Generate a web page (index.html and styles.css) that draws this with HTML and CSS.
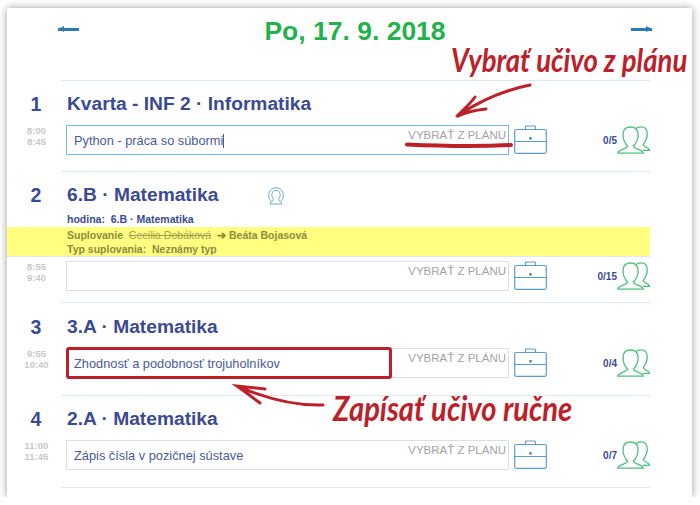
FILE: index.html
```html
<!DOCTYPE html>
<html lang="sk">
<head>
  <meta charset="UTF-8" />
  <title>Triedna kniha</title>
  <link rel="stylesheet" href="styles.css">
</head>
<body>
  <svg width="0" height="0" class="defs">
    <symbol id="case" viewBox="0 0 33 29">
      <path d="M11.5 4.5V2a1 1 0 0 1 1-1h8a1 1 0 0 1 1 1v2.5" fill="none"/>
      <rect x="0.7" y="4.5" width="31.6" height="23.8" rx="1.5" fill="none"/>
      <path d="M0.7 16.5H32.3" fill="none"/>
      <circle cx="16.5" cy="13.2" r="0.9" class="dot"/>
    </symbol>
    <symbol id="people" viewBox="0 0 33 28">
      <path d="M0.8 27.2C1 23.5 9 23.6 10.8 20.3C8 17.5 5.6 12.5 6.1 7.4C6.5 2.8 10 1 13.5 1C17 1 20.6 2.8 21 7.4C21.5 12.5 19 17.5 16.3 20.3C18 23.6 26 23.5 26.2 27.2Z" fill="none"/>
      <path d="M19.3 2.2C20.8 1.2 22.6 0.9 24 0.9C27.5 0.9 30 3 30.2 7.2C30.5 12 28.4 15.6 26.2 18.6C27.2 21.4 32 21.2 32.6 24.3H26" fill="none"/>
    </symbol>
  </svg>

  <div class="card">
    <header class="day-head">
      <span class="nav-arrow left"></span>
      <h1 class="day-title">Po, 17. 9. 2018</h1>
      <span class="nav-arrow right"></span>
    </header>
    <div class="sep"></div>

    <section class="lesson">
      <div class="lesson-head"><span class="num">1</span><h2 class="subject">Kvarta - INF 2 · Informatika</h2></div>
      <div class="lesson-row">
        <div class="times">8:00<br>8:45</div>
        <div class="topic active"><span class="topic-text">Python - práca so súbormi<i class="caret"></i></span><span class="pick">VYBRAŤ Z PLÁNU</span></div>
        <svg class="icon-case"><use href="#case"/></svg>
        <span class="count">0/5</span>
        <svg class="icon-people"><use href="#people"/></svg>
      </div>
    </section>
    <div class="sep"></div>

    <section class="lesson sub">
      <div class="lesson-head">
        <span class="num">2</span><h2 class="subject">6.B · Matematika</h2>
        <svg class="icon-teacher" viewBox="0 0 16 18"><path d="M3.5 14.5C1 12.5 0.6 10 0.7 8C1 3.5 4 0.8 8 0.8S15 3.5 15.3 8C15.4 10 15 12.5 12.5 14.5M5.5 12.5C4 10 3.5 8.5 4 6.5C4.5 4.5 6 3.5 8 3.5S11.5 4.5 12 6.5C12.5 8.5 12 10 10.5 12.5C10.5 14 13.5 14.5 14 17H2C2.5 14.5 5.5 14 5.5 12.5Z" fill="none"/></svg>
      </div>
      <div class="sub-class">hodina:&nbsp; 6.B · Matematika</div>
      <div class="sub-note">
        <div>Suplovanie&nbsp; <s>Cecília Dobáková</s> ➔ Beáta Bojasová</div>
        <div>Typ suplovania:&nbsp; Neznámy typ</div>
      </div>
      <div class="lesson-row">
        <div class="times">8:55<br>9:40</div>
        <div class="topic"><span class="topic-text"></span><span class="pick">VYBRAŤ Z PLÁNU</span></div>
        <svg class="icon-case"><use href="#case"/></svg>
        <span class="count">0/15</span>
        <svg class="icon-people"><use href="#people"/></svg>
      </div>
    </section>
    <div class="sep"></div>

    <section class="lesson third">
      <div class="lesson-head"><span class="num">3</span><h2 class="subject">3.A · Matematika</h2></div>
      <div class="lesson-row">
        <div class="times">9:55<br>10:40</div>
        <div class="topic"><span class="topic-text">Zhodnosť a podobnosť trojuholníkov</span><span class="pick">VYBRAŤ Z PLÁNU</span></div>
        <svg class="icon-case"><use href="#case"/></svg>
        <span class="count">0/4</span>
        <svg class="icon-people"><use href="#people"/></svg>
      </div>
    </section>
    <div class="sep"></div>

    <section class="lesson">
      <div class="lesson-head"><span class="num">4</span><h2 class="subject">2.A · Matematika</h2></div>
      <div class="lesson-row">
        <div class="times">11:00<br>11:45</div>
        <div class="topic"><span class="topic-text">Zápis čísla v pozičnej sústave</span><span class="pick">VYBRAŤ Z PLÁNU</span></div>
        <svg class="icon-case"><use href="#case"/></svg>
        <span class="count">0/7</span>
        <svg class="icon-people"><use href="#people"/></svg>
      </div>
    </section>
    <div class="sep"></div>
  </div>

  <!-- red notes drawn over the screenshot -->
  <svg class="marks" viewBox="0 0 700 505">
    <path class="thick" d="M407 144.5C440 146 480 146.5 511 145"/>
    <path d="M530 85C505 90 478 102 457 116M475 97C470 104 463 110 457 116.5C466 112 476 110 486 109"/>
    <path d="M323 405C295 406 265 398 238 386.5M265 389C255 388 246 387 237 386C244 391 252 397 260 403"/>
    <rect x="67.5" y="348.5" width="323" height="29" rx="1.5"/>
  </svg>
  <div class="note note-plan">Vybrať učivo z plánu</div>
  <div class="note note-hand">Zapísať učivo ručne</div>
</body>
</html>
```

FILE: styles.css
```css
body {
  margin: 0;
  background: #fff;
  font-family: "Liberation Sans", Arial, sans-serif;
  color: #3b4a94;
}

.defs {
  position: absolute;
}

.card {
  box-sizing: border-box;
  width: 685px;
  height: 489px;
  margin: 8px 0 0 7px;
  background: #fff;
  box-shadow: 0 0 8px rgba(0, 0, 0, 0.4);
}

.day-head {
  display: flex;
  align-items: flex-start;
  justify-content: space-between;
  height: 72px;
  padding: 0 40px 0 51px;
}

.day-title {
  margin: 7px 0 0;
  font-size: 26.5px;
  line-height: 32px;
  font-weight: bold;
  color: #22b14c;
}

.nav-arrow {
  position: relative;
  display: block;
  width: 21px;
  height: 3px;
  margin-top: 20px;
  background: #2a7ab8;
}

.nav-arrow::after {
  content: "";
  position: absolute;
  top: -2px;
  border-top: 3.5px solid transparent;
  border-bottom: 3.5px solid transparent;
}

.nav-arrow.left::after {
  left: 0;
  border-right: 6px solid #2a7ab8;
}

.nav-arrow.right::after {
  right: 0;
  border-left: 6px solid #2a7ab8;
}

.sep {
  height: 1px;
  margin: 0 42px 0 54px;
  background: #dfe7f1;
}

.lesson {
  padding: 12px 42px 17px 0;
}

section.lesson:first-of-type {
  padding-bottom: 16px;
}

.lesson.third {
  padding-top: 13px;
}

.lesson.sub {
  padding-right: 0;
  padding-bottom: 11px;
}

.lesson-head {
  box-sizing: border-box;
  display: flex;
  align-items: center;
  height: 24px;
  padding-bottom: 2px;
  margin-bottom: 8px;
}

.num {
  width: 58px;
  margin-right: 2px;
  text-align: center;
  font-size: 19.5px;
  font-weight: bold;
}

.subject {
  margin: 0;
  font-size: 19.2px;
  font-weight: bold;
}

.icon-teacher {
  width: 16px;
  height: 18px;
  margin-left: 50px;
  margin-top: 2px;
  stroke: #6aa9d2;
  stroke-width: 1;
}

.lesson-row {
  display: flex;
  align-items: center;
  height: 30px;
}

.sub .lesson-row {
  margin-right: 42px;
  margin-top: 4px;
}

.times {
  width: 59px;
  text-align: center;
  font-size: 9.5px;
  line-height: 11px;
  font-weight: bold;
  color: #c8c8c8;
  margin-bottom: 8px;
}

.topic {
  box-sizing: border-box;
  display: flex;
  justify-content: space-between;
  align-items: flex-start;
  width: 443px;
  height: 30px;
  padding: 0 2px 0 7px;
  border: 1px solid #dcdfe3;
  font-size: 12.8px;
  color: #4a5a9c;
}

.topic.active {
  border-color: #7fb0ee;
}

.topic-text {
  line-height: 29px;
}

.caret {
  display: inline-block;
  width: 1px;
  height: 14px;
  vertical-align: -3px;
  background: #4a5a9c;
}

.pick {
  font-size: 11.5px;
  line-height: 18px;
  color: #a3a3a3;
}

.icon-case {
  width: 33px;
  height: 29px;
  margin-left: 5px;
  margin-top: -1px;
  stroke: #5a9ccb;
  stroke-width: 1.2;
}

.icon-case .dot {
  fill: #2a7ab8;
  stroke: none;
}

.count {
  width: 70px;
  text-align: right;
  font-size: 10px;
  font-weight: bold;
}

.icon-people {
  width: 33px;
  height: 28px;
  margin-top: -1px;
  stroke: #4cc07a;
  stroke-width: 1.3;
}

.sub-class {
  margin: -4px 0 0 60px;
  font-size: 10.5px;
  line-height: 14px;
  font-weight: bold;
}

.sub-note {
  box-sizing: border-box;
  height: 30px;
  margin-top: 1px;
  padding: 1px 0 0 60px;
  background: #ffff80;
  border-bottom: 1px solid #dfe7f1;
  margin-right: 42px;
  font-size: 10.5px;
  line-height: 14px;
  font-weight: bold;
  color: #8c8c3c;
}

.sub-note s {
  margin-right: 3px;
  font-weight: normal;
  color: #a0a050;
}

.marks {
  position: absolute;
  top: 0;
  left: 0;
  width: 700px;
  height: 505px;
  fill: none;
  stroke: #bd2029;
  stroke-width: 3;
  stroke-linecap: round;
}

.marks .thick {
  stroke-width: 4;
}

.note {
  position: absolute;
  font-family: "Lato", sans-serif;
  font-style: italic;
  font-weight: bold;
  line-height: 36px;
  color: #bd2029;
  white-space: nowrap;
  transform: scaleY(1.2);
}

.note-plan {
  left: 451px;
  top: 42px;
  font-size: 27.5px;
}

.note-hand {
  left: 333px;
  top: 390px;
  font-size: 29.2px;
}
```
